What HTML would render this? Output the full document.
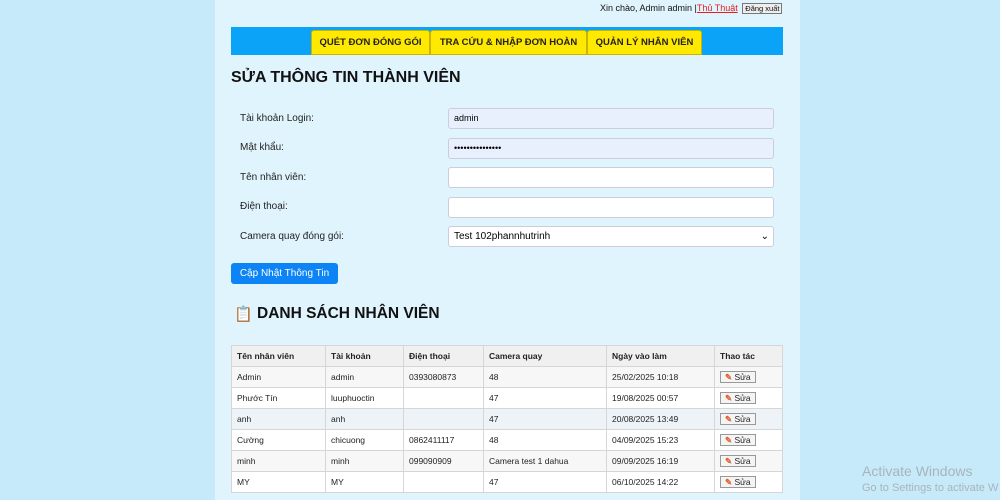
<!DOCTYPE html>
<html><head><meta charset="utf-8"><style>
*{box-sizing:border-box;margin:0;padding:0}
body{width:1000px;height:500px;overflow:hidden;background:#c7eafb;font-family:"Liberation Sans",sans-serif;position:relative}
.c{position:absolute;left:215px;top:0;width:585px;height:500px;background:#e0f4fd}
.a{position:absolute}
.top{left:600px;top:3px;font-size:9px;color:#111;white-space:nowrap}
.top u{color:#e02020}
.top span{display:inline-block;border:1px solid #777;background:#eee;font-size:7.5px;padding:0 2px;margin-left:2px}
.nav{left:231px;top:27px;width:552px;height:28px;background:#0aa3f8}
.nb{position:absolute;top:3px;height:25px;background:#ffe900;border:1px solid #c9b400;border-radius:3px 3px 0 0;font-size:9.5px;font-weight:bold;color:#222;text-align:center;line-height:24px;white-space:nowrap;overflow:hidden}
h1{position:absolute;left:231px;top:69px;font-size:16px;font-weight:bold;color:#111;white-space:nowrap}
.lb{left:240px;font-size:10px;color:#222}
.in{left:448px;width:326px;height:21px;border:1px solid #ccd;border-radius:3px;background:#fff;font-size:9px;padding-left:5px;line-height:19px}
.btn{left:231px;top:263px;width:107px;height:21px;background:#0d84f5;border-radius:3px;color:#fff;font-size:10px;text-align:center;line-height:22px}
table{position:absolute;left:231px;top:345px;width:552px;border-collapse:collapse;font-size:8.5px;color:#222}
td,th{border:1px solid #d6d6d6;height:21px;padding-left:5px;text-align:left}
th{background:#f0f0f0;font-weight:bold}
tr{background:#fff}tr.g{background:#f7f7f7}tr.b{background:#eef3f8}
.s{display:inline-block;border:1px solid #999;background:#f4f4f4;padding:0 4px;font-size:8.5px;line-height:10px}
.s b{color:#e06030}
</style></head><body>
<div class="c"></div>
<div class="a top">Xin chào, Admin admin |<u>Thủ Thuật</u> <span>Đăng xuất</span></div>
<div class="a nav">
<div class="nb" style="left:80px;width:119px">QUÉT ĐƠN ĐÓNG GÓI</div>
<div class="nb" style="left:199px;width:157px">TRA CỨU &amp; NHẬP ĐƠN HOÀN</div>
<div class="nb" style="left:356px;width:115px">QUẢN LÝ NHÂN VIÊN</div>
</div>
<h1>SỬA THÔNG TIN THÀNH VIÊN</h1>
<div class="a lb" style="top:113px">Tài khoản Login:</div>
<div class="a lb" style="top:142px">Mật khẩu:</div>
<div class="a lb" style="top:172px">Tên nhân viên:</div>
<div class="a lb" style="top:201px">Điện thoại:</div>
<div class="a lb" style="top:231px">Camera quay đóng gói:</div>
<div class="a in" style="top:108px;background:#e8f0fe">admin</div>
<div class="a in" style="top:138px;background:#e8f0fe">•••••••••••••••</div>
<div class="a in" style="top:167px"></div>
<div class="a in" style="top:197px"></div>
<div class="a in" style="top:226px;font-size:10px">Test 102phannhutrinh<span style="position:absolute;right:4px">⌄</span></div>
<div class="a btn">Cập Nhật Thông Tin</div>
<div class="a" style="left:234px;top:305px;font-size:15px">📋</div>
<div class="a" style="left:257px;top:305px;font-size:15.5px;font-weight:bold;color:#111;white-space:nowrap">DANH SÁCH NHÂN VIÊN</div>
<table>
<tr><th style="width:94px">Tên nhân viên</th><th style="width:78px">Tài khoản</th><th style="width:80px">Điện thoại</th><th style="width:123px">Camera quay</th><th style="width:108px">Ngày vào làm</th><th>Thao tác</th></tr>
<tr class="g"><td>Admin</td><td>admin</td><td>0393080873</td><td>48</td><td>25/02/2025 10:18</td><td><span class="s"><b>✎</b> Sửa</span></td></tr>
<tr><td>Phước Tín</td><td>luuphuoctin</td><td></td><td>47</td><td>19/08/2025 00:57</td><td><span class="s"><b>✎</b> Sửa</span></td></tr>
<tr class="b"><td>anh</td><td>anh</td><td></td><td>47</td><td>20/08/2025 13:49</td><td><span class="s"><b>✎</b> Sửa</span></td></tr>
<tr><td>Cường</td><td>chicuong</td><td>0862411117</td><td>48</td><td>04/09/2025 15:23</td><td><span class="s"><b>✎</b> Sửa</span></td></tr>
<tr class="g"><td>minh</td><td>minh</td><td>099090909</td><td>Camera test 1 dahua</td><td>09/09/2025 16:19</td><td><span class="s"><b>✎</b> Sửa</span></td></tr>
<tr><td>MY</td><td>MY</td><td></td><td>47</td><td>06/10/2025 14:22</td><td><span class="s"><b>✎</b> Sửa</span></td></tr>
</table>
<div class="a" style="left:862px;top:463px;font-size:14px;color:#a8b4bb">Activate Windows</div>
<div class="a" style="left:862px;top:482px;font-size:11px;color:#a8b4bb">Go to Settings to activate W</div>
</body></html>
